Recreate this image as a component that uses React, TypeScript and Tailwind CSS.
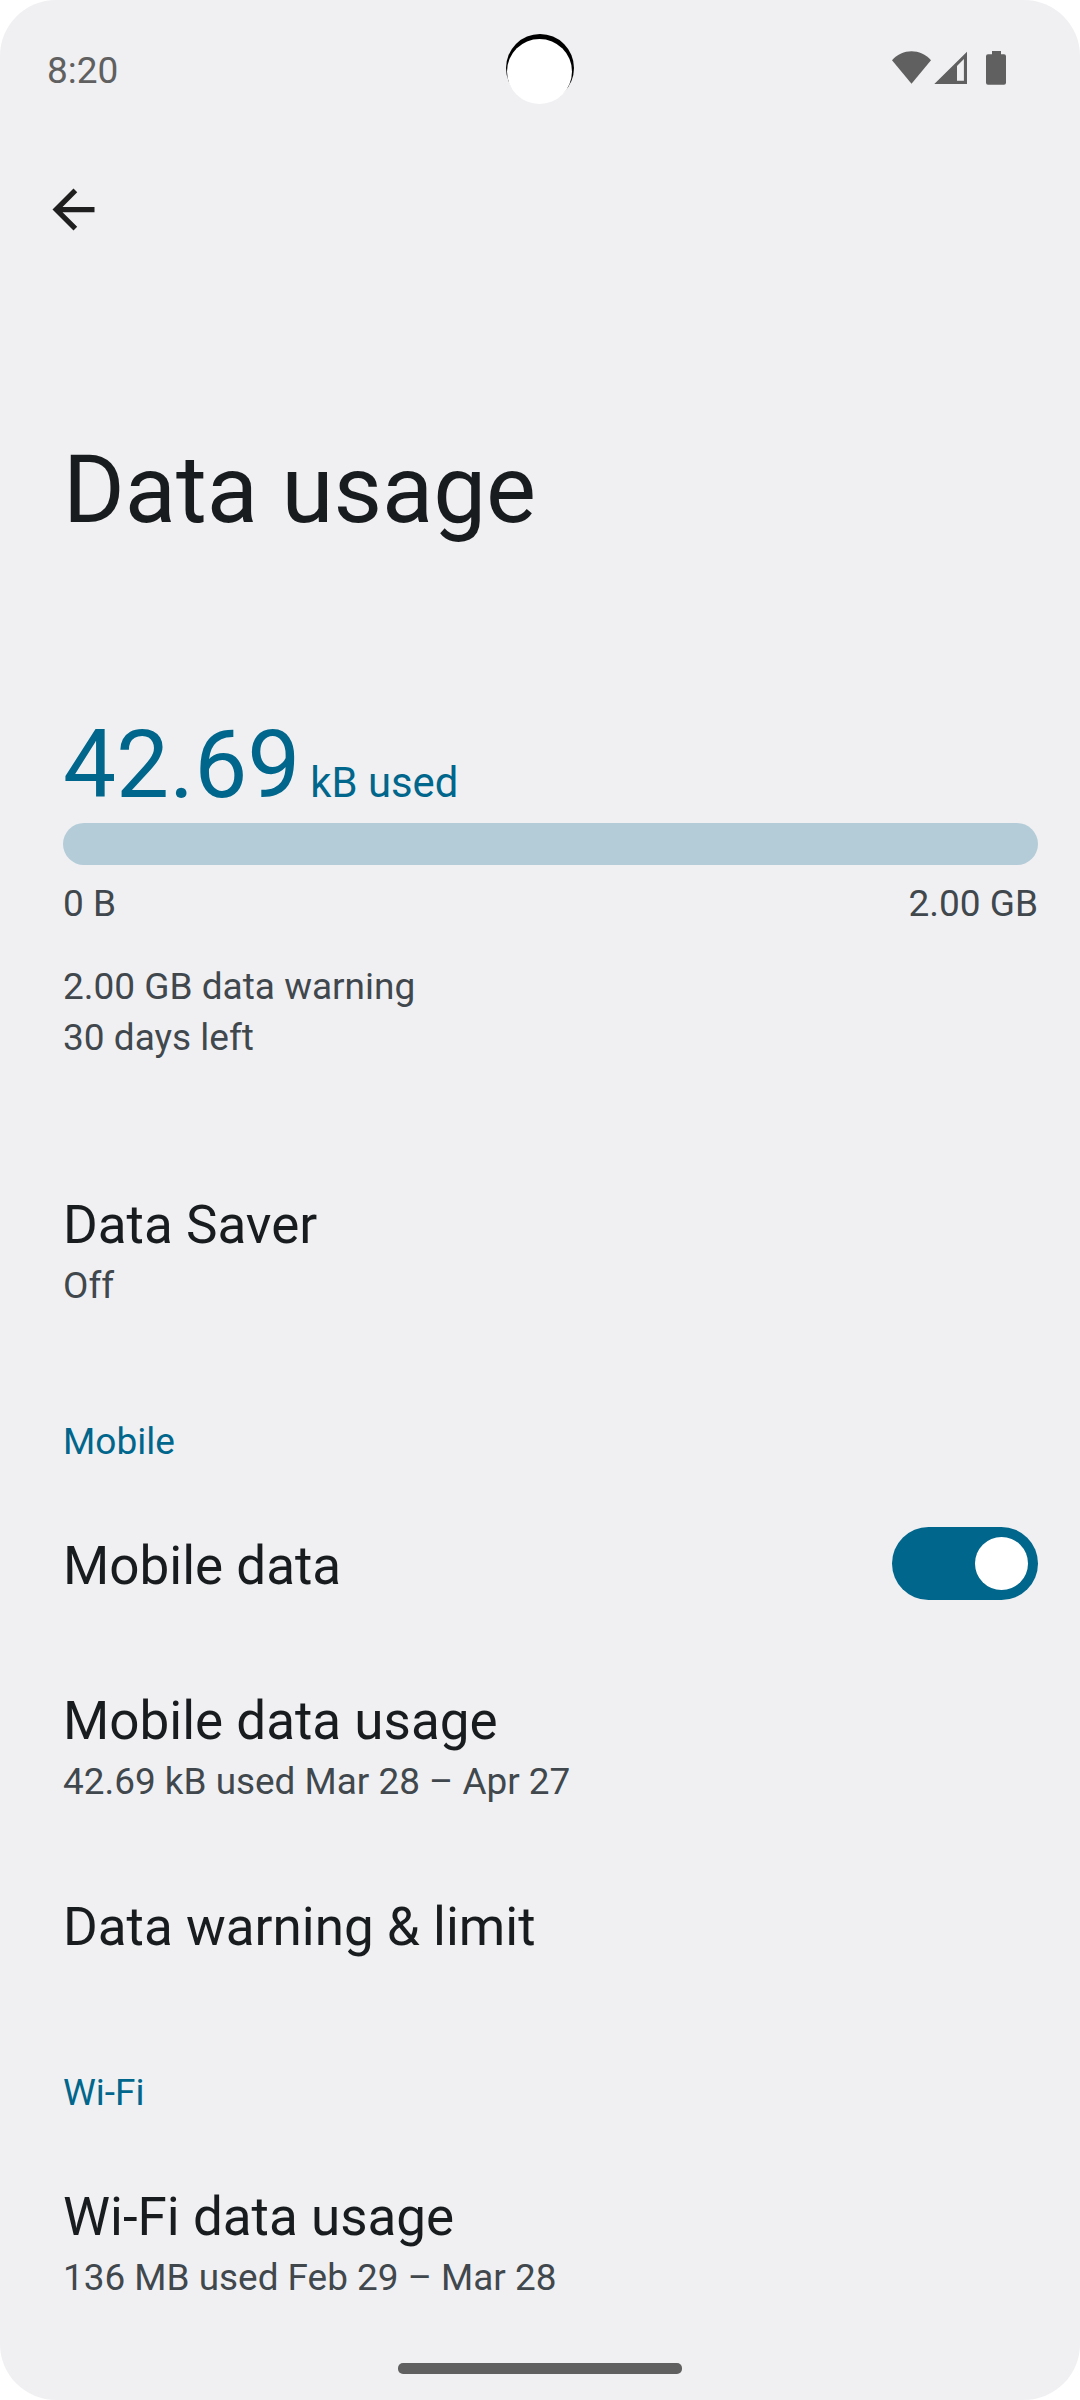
type RowProps = { title: string; sub?: string; toggle?: boolean };

function Row({ title, sub, toggle }: RowProps) {
  return (
    <div className="flex items-start justify-between pb-[46px] pt-[47px]">
      <div className="whitespace-nowrap">
        <div className="text-[53px] leading-[62px] text-[#191c1e]">{title}</div>
        {sub && <div className="mt-2 text-[36.9px] leading-[43px] text-[#41484d]">{sub}</div>}
      </div>
      {toggle && (
        <div
          role="switch"
          aria-checked="true"
          className="-mb-[3px] -mt-2 flex h-[73px] w-[146px] items-center justify-end rounded-full bg-[#00668b] pr-[10px]"
        >
          <div className="size-[53px] rounded-full bg-white" />
        </div>
      )}
    </div>
  );
}

function Section({ children }: { children: string }) {
  return <h2 className="pb-[25px] pt-[67px] text-[37px] leading-[43px] text-[#00668b]">{children}</h2>;
}

function StatusIcons() {
  return (
    <svg width="118" height="36" viewBox="0 0 118 36" fill="#606060">
      <path d="M2 10.2C7.5 4 14.2 1.2 21.5 1.2S35.5 4 41 10.2L21.500 33.800Z" />
      <path fillRule="evenodd" d="M77 1.700V34H44.300ZM67 16v14.800h6.900V9.100Z" />
      <path d="M102 1h9v3.300h3a2 2 0 0 1 2 2v26.400a2 2 0 0 1-2 2H98a2 2 0 0 1-2-2V6.300a2 2 0 0 1 2-2h4z" />
    </svg>
  );
}

export default function App() {
  return (
    <div className="h-[2400px] w-[1080px] bg-white font-['Roboto',sans-serif]">
      <div className="relative flex h-[2400px] flex-col overflow-hidden rounded-[56px] bg-[#f0f0f3]">
        <header className="flex h-[136px] items-center justify-between pl-[47px] pr-[72px]">
          <span className="mt-[5px] text-[37px] leading-[43px] text-[#606060]">8:20</span>
          <StatusIcons />
        </header>
        <div className="absolute left-[506px] top-[34px] size-[68px] rounded-full bg-black">
          <div className="ml-px mt-[5px] size-[65px] rounded-full bg-white" />
        </div>
        <svg className="ml-[42px] mt-[42px] shrink-0" width="63" height="63" viewBox="0 0 24 24" fill="#1f1f1f">
          <path d="M20 11H7.830l5.590-5.590L12 4l-8 8 8 8 1.410-1.410L7.830 13H20z" />
        </svg>
        <main className="flex flex-col pl-[63px] pr-[42px]">
          <h1 className="mt-[194px] text-[94.2px] leading-[110px] text-[#191c1e]">Data usage</h1>
          <div className="mt-[165px] flex h-[110px] items-baseline whitespace-nowrap text-[#00668b]">
            <span className="text-[94.500px] leading-[110px]">42.69</span>
            <span className="ml-[10px] text-[41.8px] leading-none">kB used</span>
          </div>
          <div className="mt-[3px] h-[42px] rounded-full bg-[#b3ccd8]" />
          <div className="mt-[17px] flex justify-between text-[37px] leading-[43px] text-[#41484d]">
            <span>0 B</span>
            <span>2.00 GB</span>
          </div>
          <div className="mb-[84px] mt-9 text-[37px] leading-[51px] text-[#41484d]">
            <p>2.00 GB data warning</p>
            <p>30 days left</p>
          </div>
          <Row title="Data Saver" sub="Off" />
          <Section>Mobile</Section>
          <Row title="Mobile data" toggle />
          <Row title="Mobile data usage" sub="42.69 kB used Mar 28 – Apr 27" />
          <Row title="Data warning &amp; limit" />
          <Section>Wi-Fi</Section>
          <Row title="Wi-Fi data usage" sub="136 MB used Feb 29 – Mar 28" />
        </main>
        <div className="absolute bottom-[26px] left-[398px] h-[11px] w-[284px] rounded-[5px] bg-[#606060]" />
      </div>
    </div>
  );
}
